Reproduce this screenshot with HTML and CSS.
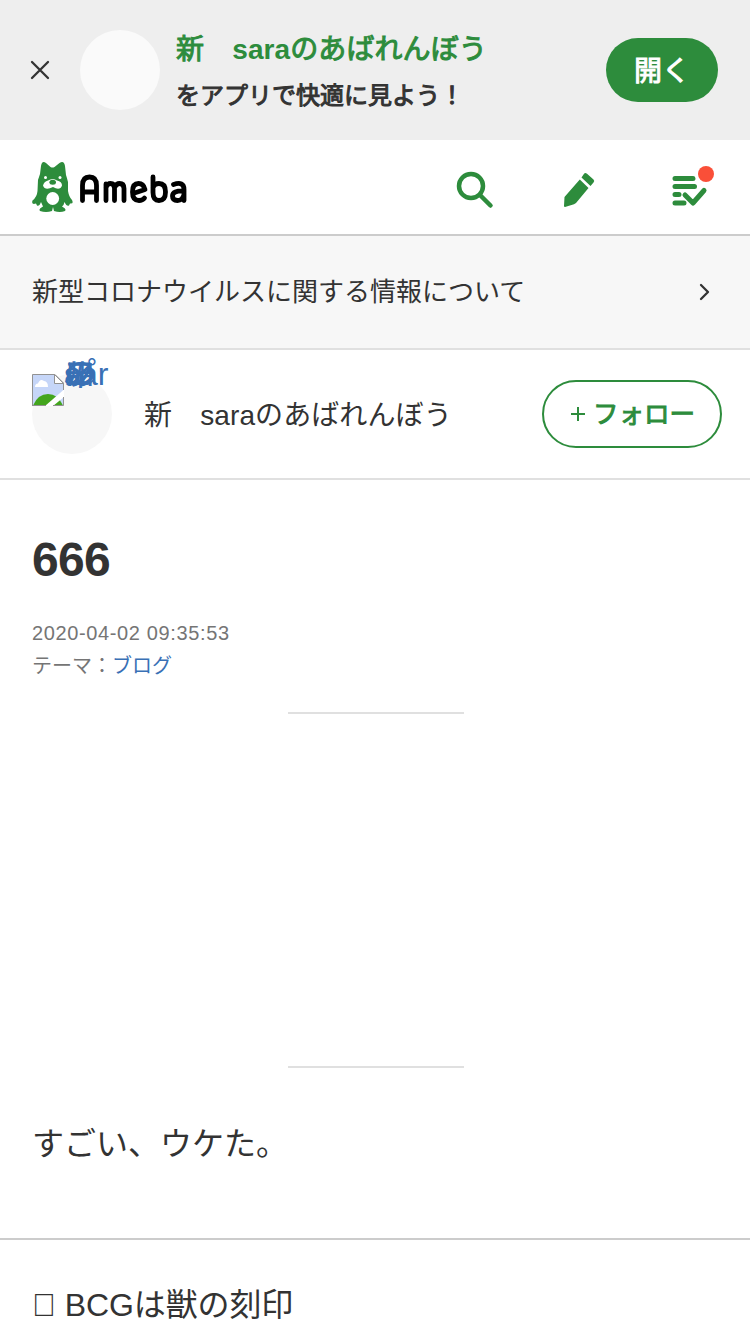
FILE: index.html
```html
<!DOCTYPE html>
<html lang="ja">
<head>
<meta charset="utf-8">
<title>666 | 新　saraのあばれんぼう</title>
<link rel="stylesheet" href="styles.css">
</head>
<body>
<aside class="app-banner">
  <svg class="close" viewBox="0 0 20 20"><path d="M2 2L18 18M18 2L2 18"/></svg>
  <div class="app-avatar"></div>
  <div class="app-copy">
    <p class="app-title"><span class="semi">新　</span>sara<span class="semi">のあばれんぼう</span></p>
    <p class="app-sub semi">をアプリで快適に見よう！</p>
  </div>
  <a class="open semi">開く</a>
</aside>
<header class="header">
  <svg class="logo" viewBox="0 0 156 50" role="img" aria-label="Ameba">
    <path fill="#2d8c3c" d="M9 4Q10-2 14 1L18.500 5Q20.500 6 22.500 5L27.500 1Q32-2 33 4L34 13Q35 16 36 20L36 29Q37 35 40 38Q42 42 38 41.500L37 43.500Q35 45 32.500 40Q32 43 30 44.500Q35 47 33 49Q28 51 22 49L21 45L20 49Q14 51 8 49Q6 47 11 44.500L9 40Q7 45 5 43.500L4 41.500Q-1 43 .5 38.500Q5 35 5.500 29L6 18Q7 15 8 12Z"/>
    <g fill="#fff"><circle cx="13.500" cy="15.500" r="1.500"/><circle cx="28" cy="15.500" r="1.500"/><path d="M16 18.500Q21 15.500 25 18.500Q30 19.500 30 23.500Q28 29 21 25Q13 29 11 23.500Q12 19.500 16 18.500Z"/><circle cx="20.700" cy="36.500" r="6.400"/></g>
    <ellipse cx="20.700" cy="20.300" rx="3.300" ry="2.500" fill="#2d8c3c"/>
    <g class="wordmark"><path d="M50.500 38.500V23.500Q50.500 15 57.500 15Q64.500 15 64.500 23.500V38.500M50.500 30H64.500"/><path d="M74 38.500V22M74 25.500Q75.500 21.500 78.500 21.500Q82.500 21.500 82.500 26.500V38.500M82.500 25.500Q84.500 21.500 87.500 21.500Q92 21.500 92 26.500V38.500"/><path d="M101 31.500L113 27.500Q111.500 21.500 106.500 21.500Q100.500 21.500 100.500 30Q100.500 38.500 107 38.500Q110.500 38.500 112.500 36"/><path d="M121 15V30.500Q121 38.500 127 38.500Q133.500 38.500 133.500 30Q133.500 21.500 127 21.500Q122.500 21.500 121 25.500"/><path d="M141.500 22.500Q152 19 152 27.500V38.500M152 29Q140.500 28.500 140.500 34Q140.500 38.500 145.500 38.500Q150.500 38.500 152 32.500"/></g>
  </svg>
  <nav class="nav">
    <svg class="ico" viewBox="0 0 40 40"><g class="line"><circle cx="16" cy="16" r="12"/><path d="M25 25L35.500 35.500"/></g></svg>
    <svg class="ico" viewBox="0 0 40 40"><path d="M25.200 3.500Q26.500 2.500 28 3.800L34.500 9.500Q36 11 34.500 12.500L31.500 16L22.500 7.500ZM20.800 9.500L29.500 18L17 33L15 34.300L6 37Q5 37 5 36L5.500 27Z"/></svg>
    <svg class="ico feed" viewBox="0 0 40 40"><g class="line thick"><path d="M8 8.500H26M8 16.500H27.500M8 24.500H12M8 33H17M18 25L26 33L37 20.500"/></g><circle cx="39" cy="4" r="11" fill="#fff"/><circle cx="39" cy="4" r="8" fill="#fa4f38"/></svg>
  </nav>
</header>
<a class="notice"><span>新型コロナウイルスに関する情報について</span><svg viewBox="0 0 16 20"><path d="M4 3L11 10L4 17"/></svg></a>
<section class="blog">
  <a class="profile">
    <svg class="broken" viewBox="0 0 16 16"><path d="M.25.25H11.500L15.750 4.500V15.750H.25Z" fill="#c6d6f8"/><path d="M1.500 6.500Q1.500 5 3 4.800Q4 2 6 3.500Q8 3.800 8 6.500Z" fill="#fff"/><path d="M.5 15.700Q3 10 8 10Q13 10 15.500 15.700Z" fill="#43a51d"/><path d="M16 7.800V11.500L10.500 16H6.500Z" fill="#fff"/><path d="M.25 15.750H7M.25 16V.25H11.500L15.750 4.500V8M10.500 15.750H15.750V11.500" fill="none" stroke="#929292" stroke-width=".5"/><path d="M11.250.25V4.750H15.750Z" fill="#fff" stroke="#929292" stroke-width=".5"/></svg>
    <span class="alt">saraのプロフィール</span>
  </a>
  <h2 class="blog-name">新　saraのあばれんぼう</h2>
  <button class="follow"><svg viewBox="0 0 14 14"><path d="M7 0V14M0 7H14"/></svg><span class="semi">フォロー</span></button>
</section>
<main class="entry">
  <h1>666</h1>
  <p class="date">2020-04-02 09:35:53</p>
  <p class="theme">テーマ：<a>ブログ</a></p>
  <div class="ad"></div>
  <p class="body">すごい、ウケた。</p>
</main>
<section class="next"><p>&#xE73A; BCGは獣の刻印</p></section>
</body>
</html>
```

FILE: styles.css
```css
* { box-sizing: border-box; }
body { margin: 0; width: 750px; height: 1334px; overflow: hidden; background: #fff; color: #333; font-family: "Liberation Sans", "Noto Sans CJK JP", sans-serif; }
p, h1, h2 { margin: 0; }
svg { display: block; flex: none; }
.app-banner { display: flex; align-items: center; height: 140px; padding: 0 32px 0 30px; background: #eee; }
.close { width: 20px; height: 20px; fill: none; stroke: #333; stroke-width: 2.3; stroke-linecap: round; }
.app-avatar { width: 80px; height: 80px; margin: 0 16px 0 30px; border-radius: 50%; background: #fafafa; }
.app-copy { flex: 1; font-weight: 700; }
.app-title { padding-top: 1px; color: #2d8c3c; font-size: 28px; line-height: 44px; letter-spacing: .1px; }
.app-sub { font-size: 24px; line-height: 34px; padding-top: 7px; }
.semi { font-weight: 400; -webkit-text-stroke: 1px currentColor; }
.open { width: 112px; height: 64px; padding-top: 2px; border-radius: 32px; background: #2d8c3c; color: #fff; font-size: 28px; line-height: 64px; text-align: center; }
.header { display: flex; align-items: center; justify-content: space-between; height: 96px; padding: 0 43px 0 32px; border-bottom: 2px solid #ccc; }
.logo { width: 156px; height: 50px; }
.wordmark { fill: none; stroke: #000; stroke-width: 4.8; stroke-linecap: round; stroke-linejoin: round; }
.nav { display: flex; gap: 64px; padding-top: 6px; }
.feed { margin-left: 4px; }
.ico { width: 40px; height: 40px; fill: #2d8c3c; overflow: visible; }
.line { fill: none; stroke: #2d8c3c; stroke-width: 4.5; stroke-linecap: round; stroke-linejoin: round; }
.thick { stroke-width: 5; }
.notice { display: flex; align-items: center; justify-content: space-between; height: 114px; padding: 0 37px 0 32px; border-bottom: 2px solid #e0e0e0; background: #f7f7f7; font-size: 26px; }
.notice span { padding-bottom: 5px; }
.notice svg { width: 16px; height: 20px; fill: none; stroke: #333; stroke-width: 2.3; stroke-linecap: round; stroke-linejoin: round; }
.blog { display: flex; align-items: center; height: 130px; padding: 0 28px 0 32px; border-bottom: 2px solid #e0e0e0; }
.profile { display: flex; align-items: flex-start; width: 80px; height: 80px; margin-right: 32px; border-radius: 50%; background: #f7f7f7; color: #3970b5; }
.broken { width: 32px; height: 32px; }
.alt { width: 48px; font-size: 32px; line-height: 0; word-break: break-all; }
.blog-name { flex: 1; padding-bottom: 2px; font-size: 28px; font-weight: 400; letter-spacing: .1px; }
.follow { display: flex; align-items: center; justify-content: center; gap: 8px; width: 180px; height: 68px; padding: 0 0 0 2px; border: 2px solid #2d8c3c; border-radius: 34px; background: #fff; color: #2d8c3c; font: 400 25.5px "Liberation Sans", "Noto Sans CJK JP", sans-serif; }
.follow span { padding-bottom: 5px; }
.follow svg { width: 14px; height: 14px; stroke: #2d8c3c; stroke-width: 2; }
.entry { height: 760px; padding: 48px 32px 0; border-bottom: 2px solid #ccc; }
h1 { font-size: 48px; line-height: 64px; letter-spacing: -.7px; }
.date, .theme { color: #757575; font-size: 20px; line-height: 32px; }
.date { margin-top: 25px; letter-spacing: .63px; }
.theme { padding-top: 1px; }
.theme a { color: #3970b5; }
.ad { width: 176px; height: 356px; margin: 30px 0 0 256px; border: solid #e0e0e0; border-width: 2px 0; }
.body { margin-top: 52px; font-size: 32px; line-height: 48px; }
.next { padding: 41px 32px 0; font-size: 32px; line-height: 48px; letter-spacing: -.1px; }
```
